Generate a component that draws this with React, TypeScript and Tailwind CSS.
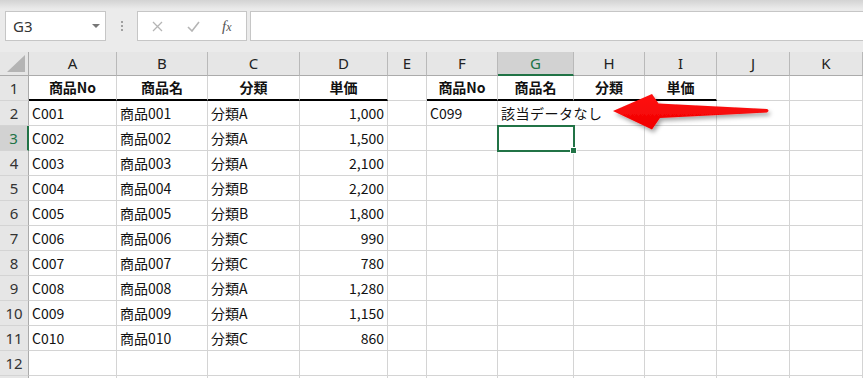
import React from 'react';

const rows = [
  ['C001', '商品001', '分類A', '1,000'],
  ['C002', '商品002', '分類A', '1,500'],
  ['C003', '商品003', '分類A', '2,100'],
  ['C004', '商品004', '分類B', '2,200'],
  ['C005', '商品005', '分類B', '1,800'],
  ['C006', '商品006', '分類C', '990'],
  ['C007', '商品007', '分類C', '780'],
  ['C008', '商品008', '分類A', '1,280'],
  ['C009', '商品009', '分類A', '1,150'],
  ['C010', '商品010', '分類C', '860'],
];

const letters = ['A', 'B', 'C', 'D', 'E', 'F', 'G', 'H', 'I', 'J', 'K'];
const headers = ['商品No', '商品名', '分類', '単価'];

function Cell({
  children,
  className = '',
}: {
  children?: React.ReactNode;
  className?: string;
}) {
  return (
    <div
      className={`relative h-[25px] border-r border-b border-[#d4d4d4] px-[3px] flex items-center whitespace-nowrap text-[14px] text-[#111] ${className}`}
    >
      {children}
    </div>
  );
}

function RowHead({ n, active = false }: { n?: number; active?: boolean }) {
  return (
    <div
      className={`h-[25px] border-b border-[#d4d4d4] flex items-center justify-center text-[15px] font-['Noto_Sans',sans-serif] ${
        active
          ? 'bg-[#d2d2d2] border-r-2 border-r-[#217346] text-[#217346]'
          : 'bg-[#e6e6e6] border-r border-r-[#ababab] text-[#333]'
      }`}
    >
      {n}
    </div>
  );
}

export default function App() {
  return (
    <div className="w-[863px] h-[378px] overflow-hidden bg-white font-['Noto_Sans_CJK_JP',sans-serif]">
      {/* Formula bar */}
      <div className="h-[52px] bg-[linear-gradient(to_bottom,#d3d3d3,#ebebeb_9px)] flex items-start pt-[11px] pl-[5px]">
        <div className="w-[101px] h-[30px] bg-white border border-[#c6c6c6] flex items-center pl-[7px] pr-[5px]">
          <span className="flex-1 text-[15px] text-[#333] font-['Noto_Sans',sans-serif]">G3</span>
          <svg width="8" height="4" viewBox="0 0 8 4">
            <path d="M0 0 L8 0 L4 4 Z" fill="#777" />
          </svg>
        </div>
        <div className="w-[31px] h-[30px] flex flex-col items-center justify-center gap-[2px]">
          <span className="w-[2px] h-[2px] bg-[#a0a0a0]" />
          <span className="w-[2px] h-[2px] bg-[#a0a0a0]" />
          <span className="w-[2px] h-[2px] bg-[#a0a0a0]" />
        </div>
        <div className="w-[110px] h-[30px] bg-white border border-[#c6c6c6] flex items-center">
          <svg className="ml-[14px]" width="11" height="11" viewBox="0 0 11 11">
            <path d="M1 1 L10 10 M10 1 L1 10" stroke="#b5b5b5" strokeWidth="1.3" />
          </svg>
          <svg className="ml-[24px]" width="13" height="11" viewBox="0 0 13 11">
            <path d="M1 6 L5 10 L12 1" stroke="#b5b5b5" strokeWidth="1.6" fill="none" />
          </svg>
          <span className="ml-[22px] text-[15px] italic text-[#555] font-['Liberation_Serif',serif] leading-none">
            f<span className="text-[12px]">x</span>
          </span>
        </div>
        <div className="flex-1 h-[30px] ml-[3px] -mr-[2px] bg-white border border-[#c6c6c6]" />
      </div>

      {/* Sheet */}
      <div className="relative grid grid-cols-[29px_88px_91px_92px_88px_39px_71px_76px_71px_72px_73px_73px]">
        {/* Column headers */}
        <div className="h-[24px] bg-[#e6e6e6] border-r border-b border-[#ababab] flex items-end justify-end p-[3px]">
          <svg width="18" height="17" viewBox="0 0 18 17">
            <path d="M18 0 L18 17 L0 17 Z" fill="#b4b4b4" />
          </svg>
        </div>
        {letters.map((l) => (
          <div
            key={l}
            className={`h-[24px] border-r border-r-[#b9b9b9] flex items-center justify-center text-[15px] font-['Noto_Sans',sans-serif] ${
              l === 'G'
                ? 'bg-[#d2d2d2] border-b-2 border-b-[#217346] text-[#217346]'
                : 'bg-[#e6e6e6] border-b border-b-[#ababab] text-[#222]'
            }`}
          >
            {l}
          </div>
        ))}

        {/* Row 1 */}
        <RowHead n={1} />
        {headers.map((h) => (
          <Cell key={h} className="justify-center font-bold border-b-2 border-b-black">
            {h}
          </Cell>
        ))}
        <Cell />
        {headers.map((h) => (
          <Cell key={'f' + h} className="justify-center font-bold border-b-2 border-b-black">
            {h}
          </Cell>
        ))}
        <Cell />
        <Cell />

        {/* Data rows */}
        {rows.map((r, i) => (
          <React.Fragment key={r[0]}>
            <RowHead n={i + 2} active={i === 1} />
            <Cell>{r[0]}</Cell>
            <Cell>{r[1]}</Cell>
            <Cell>{r[2]}</Cell>
            <Cell className="justify-end">{r[3]}</Cell>
            <Cell />
            {i === 0 ? (
              <>
                <Cell>C099</Cell>
                <Cell className="border-r-transparent z-10 overflow-visible">
                  <span className="tracking-[0.5px]">該当データなし</span>
                </Cell>
              </>
            ) : i === 1 ? (
              <>
                <Cell />
                <Cell className="z-10">
                  <div className="absolute -left-[1px] -top-[1px] w-[78px] h-[27px] border-2 border-[#217346]" />
                  <div className="absolute left-[72px] top-[21px] w-[7px] h-[7px] bg-[#217346] border border-white" />
                </Cell>
              </>
            ) : (
              <>
                <Cell />
                <Cell />
              </>
            )}
            <Cell />
            <Cell />
            <Cell />
            <Cell />
          </React.Fragment>
        ))}

        {/* Row 12 and the top edge of row 13 */}
        <RowHead n={12} />
        {letters.map((l) => (
          <Cell key={'r12' + l} />
        ))}
        <RowHead />
        {letters.map((l) => (
          <Cell key={'r13' + l} />
        ))}

        {/* Red arrow */}
        <svg
          className="absolute left-[600px] top-[33px] pointer-events-none z-20"
          width="180"
          height="55"
          viewBox="600 85 180 55"
        >
          <defs>
            <filter id="sh" x="-10%" y="-30%" width="130%" height="180%">
              <feDropShadow dx="2" dy="3" stdDeviation="2" floodColor="#000" floodOpacity="0.35" />
            </filter>
            <linearGradient id="rg" x1="0" y1="0" x2="0" y2="1">
              <stop offset="0" stopColor="#ff1010" />
              <stop offset="1" stopColor="#f00000" />
            </linearGradient>
          </defs>
          <path
            d="M613,111 L652,94 L658.5,103.5 L767,109 Q770,110.6 767,112.4 L660,118 L652,129.5 Z"
            fill="url(#rg)"
            filter="url(#sh)"
          />
        </svg>
      </div>
    </div>
  );
}
